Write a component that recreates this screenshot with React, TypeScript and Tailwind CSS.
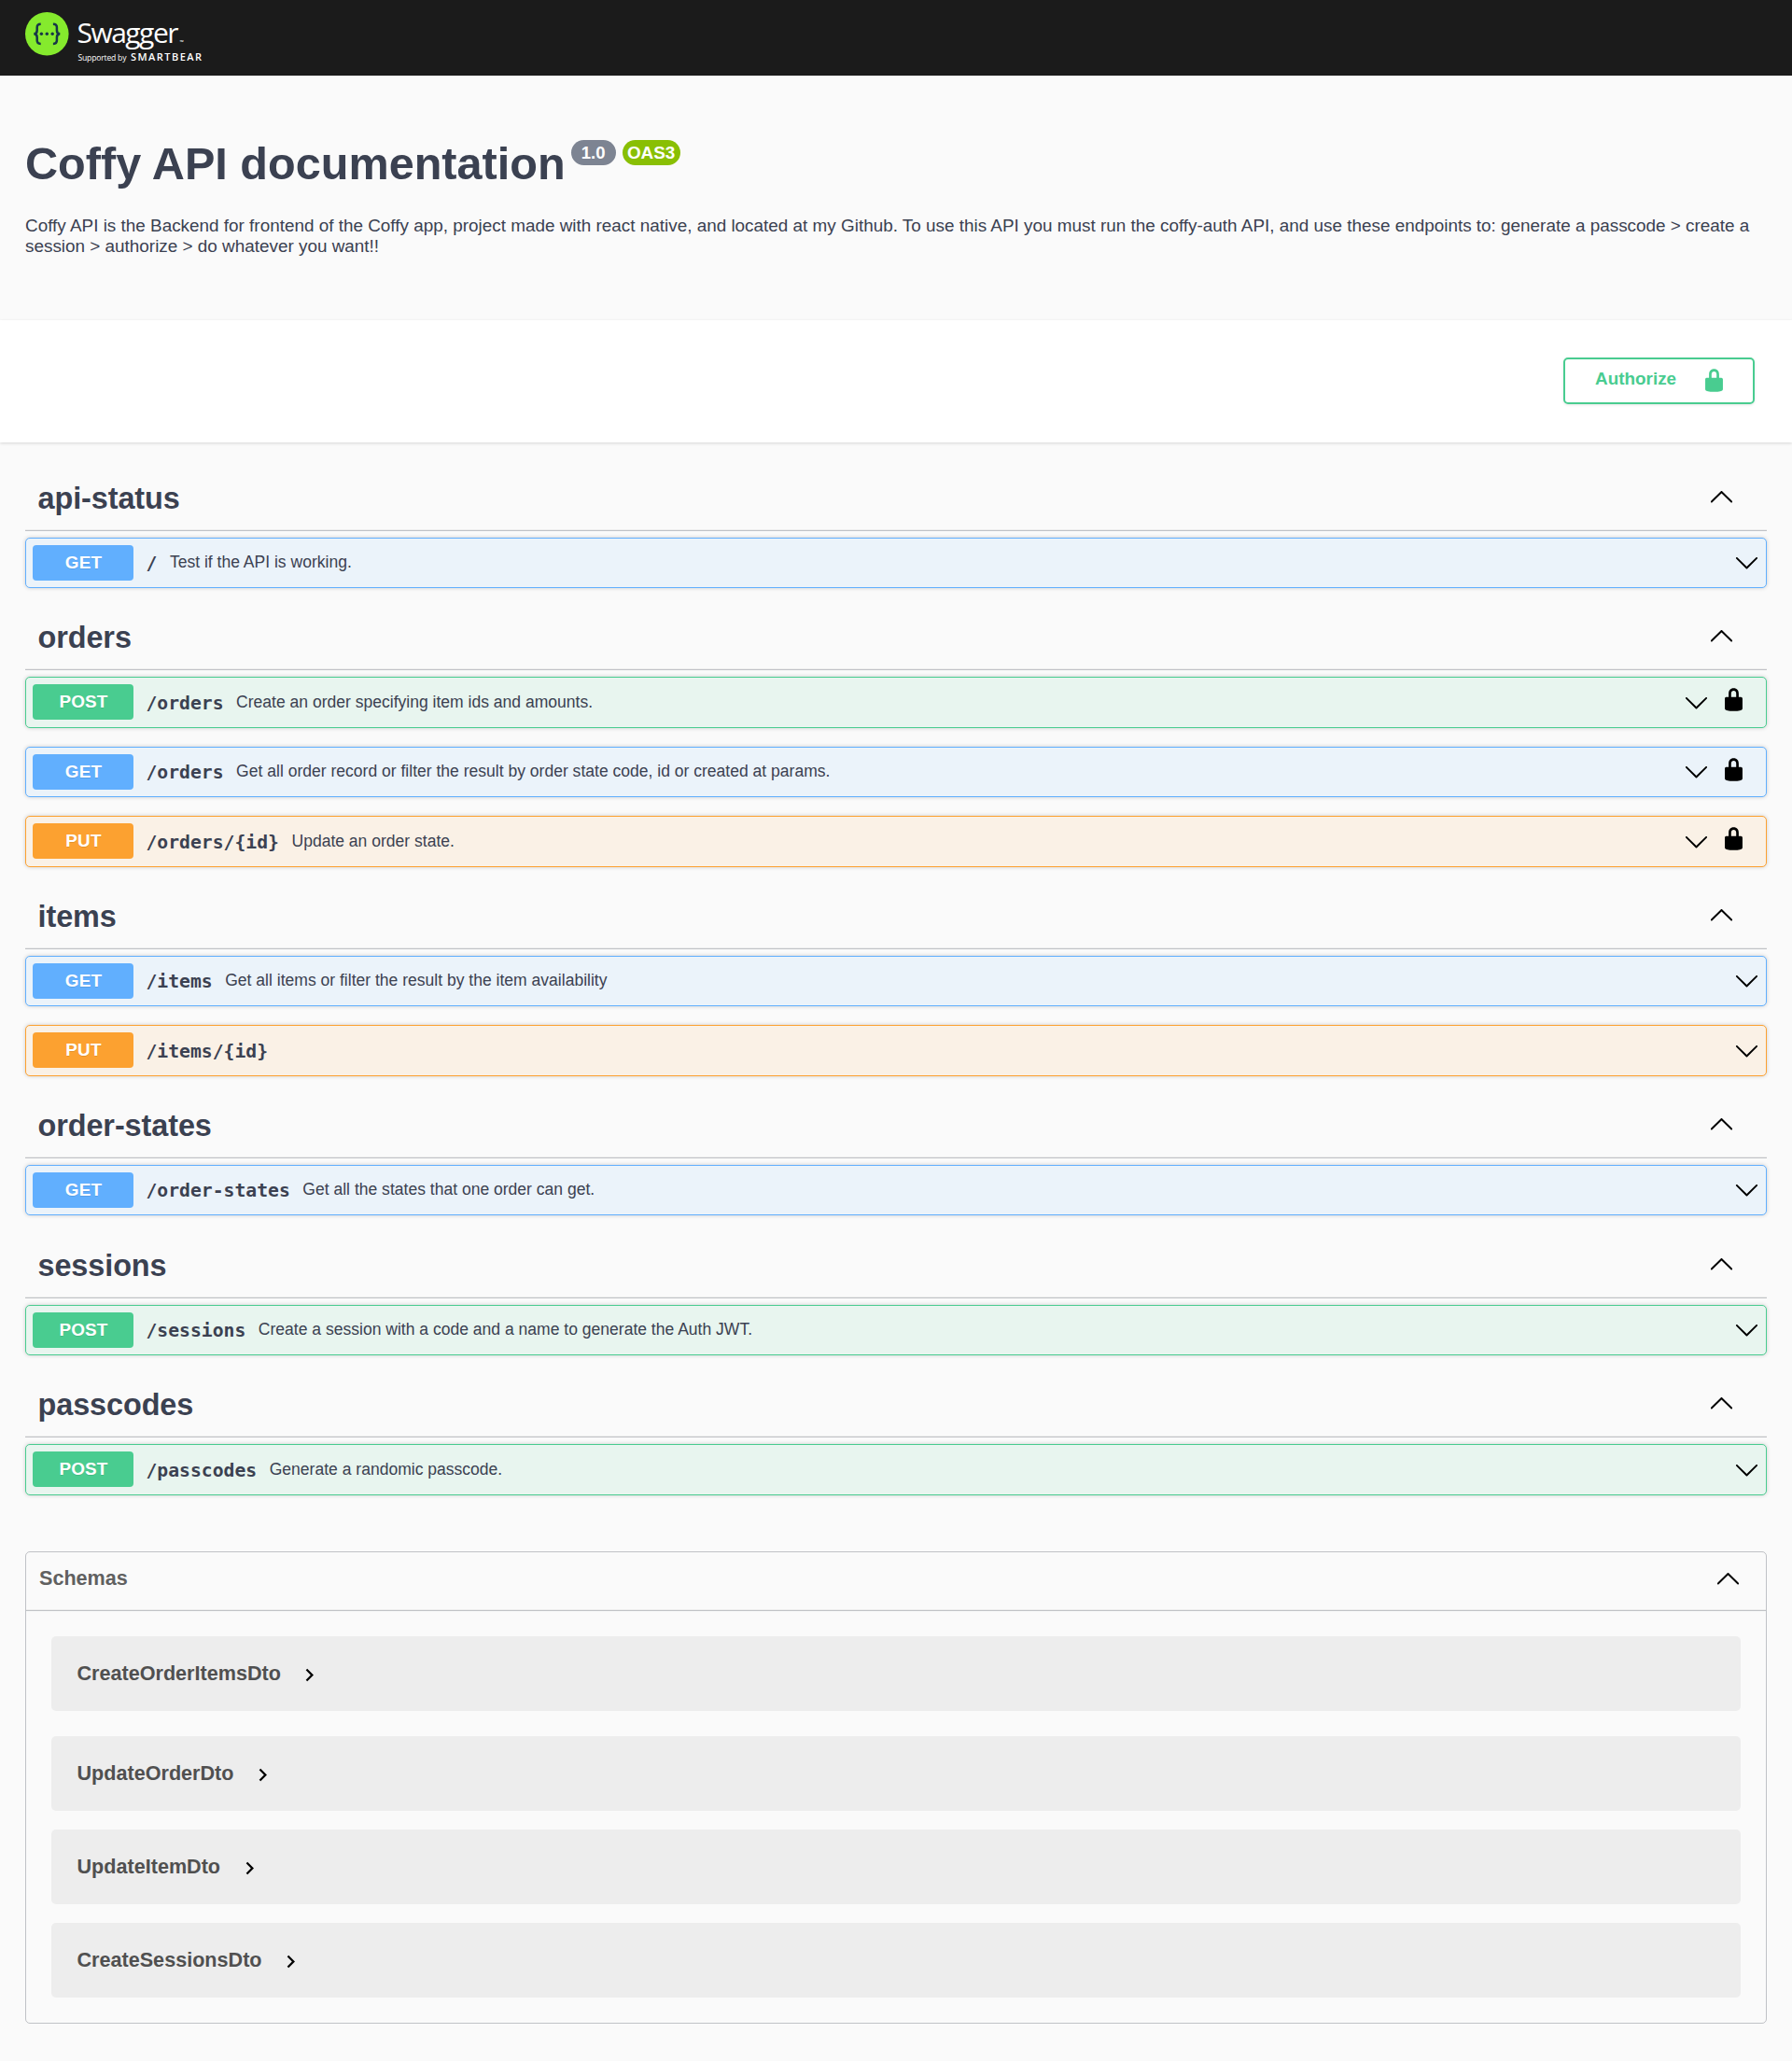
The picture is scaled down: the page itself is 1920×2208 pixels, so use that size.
type Method = 'GET' | 'POST' | 'PUT';

interface Operation {
  method: Method;
  path: string;
  summary: string;
  locked?: boolean;
  tall?: boolean;
}

interface Tag {
  name: string;
  operations: Operation[];
  spaced?: boolean;
}

const tags: Tag[] = [
  {
    name: 'api-status',
    operations: [{ method: 'GET', path: '/', summary: 'Test if the API is working.' }],
  },
  {
    name: 'orders',
    operations: [
      {
        method: 'POST',
        path: '/orders',
        summary: 'Create an order specifying item ids and amounts.',
        locked: true,
        tall: true,
      },
      {
        method: 'GET',
        path: '/orders',
        summary: 'Get all order record or filter the result by order state code, id or created at params.',
        locked: true,
      },
      { method: 'PUT', path: '/orders/{id}', summary: 'Update an order state.', locked: true, tall: true },
    ],
  },
  {
    name: 'items',
    operations: [
      { method: 'GET', path: '/items', summary: 'Get all items or filter the result by the item availability' },
      { method: 'PUT', path: '/items/{id}', summary: '', tall: true },
    ],
  },
  {
    name: 'order-states',
    operations: [{ method: 'GET', path: '/order-states', summary: 'Get all the states that one order can get.' }],
    spaced: true,
  },
  {
    name: 'sessions',
    operations: [
      { method: 'POST', path: '/sessions', summary: 'Create a session with a code and a name to generate the Auth JWT.' },
    ],
  },
  {
    name: 'passcodes',
    operations: [{ method: 'POST', path: '/passcodes', summary: 'Generate a randomic passcode.', tall: true }],
  },
];

const schemas = ['CreateOrderItemsDto', 'UpdateOrderDto', 'UpdateItemDto', 'CreateSessionsDto'];

const rowStyles: Record<Method, string> = {
  GET: 'border-[#61affe] bg-[#ebf3fa]',
  POST: 'border-[#49cc90] bg-[#e8f5ef]',
  PUT: 'border-[#fca130] bg-[#faf1e6]',
};

const badgeStyles: Record<Method, string> = {
  GET: 'bg-[#61affe]',
  POST: 'bg-[#49cc90]',
  PUT: 'bg-[#fca130]',
};

function ArrowDown({ className = '' }: { className?: string }) {
  return (
    <svg viewBox="0 0 20 20" className={`block size-[27px] shrink-0 ${className}`}>
      <path d="M17.418 6.109c.272-.268.709-.268.979 0s.271.701 0 .969l-7.908 7.83c-.27.268-.707.268-.979 0l-7.908-7.83c-.27-.268-.27-.701 0-.969.271-.268.709-.268.979 0L10 13.25l7.418-7.141z" />
    </svg>
  );
}

function ArrowUp({ className = '' }: { className?: string }) {
  return (
    <svg viewBox="0 0 20 20" className={`block size-[27px] shrink-0 ${className}`}>
      <path d="M17.418 14.908c.272.268.709.268.979 0s.271-.701 0-.969l-7.908-7.83c-.27-.268-.707-.268-.979 0l-7.908 7.83c-.27.268-.27.701 0 .969.271.268.709.268.979 0L10 7.767l7.418 7.141z" />
    </svg>
  );
}

function ArrowRight({ className = '' }: { className?: string }) {
  return (
    <svg viewBox="0 0 24 24" className={`block size-[27px] shrink-0 ${className}`}>
      <path d="M10 6L8.59 7.41 13.17 12l-4.58 4.59L10 18l6-6z" />
    </svg>
  );
}

function Lock({ className = '' }: { className?: string }) {
  return (
    <svg viewBox="0 0 20 20" className={`block size-[27px] shrink-0 ${className}`} fill="currentColor">
      <path d="M15.8 8H14V5.6C14 2.703 12.665 1 10 1 7.334 1 6 2.703 6 5.6V8H4c-.553 0-1 .646-1 1.199V17c0 .549.428 1.139.951 1.307l1.197.387C5.672 18.861 6.55 19 7.1 19h5.8c.549 0 1.428-.139 1.951-.307l1.196-.387c.524-.167.953-.757.953-1.306V9.199C17 8.646 16.352 8 15.8 8zM12 8H8V5.199C8 3.754 8.797 3 10 3c1.203 0 2 .754 2 2.199V8z" />
    </svg>
  );
}

function Logo() {
  return (
    <svg viewBox="0 0 200 60" className="block h-[60px] w-[200px]">
      <circle cx="23.3" cy="29.3" r="23.3" fill="#85ea2d" />
      <g fill="none" stroke="#173647" strokeWidth="2.5">
        <path d="M16.7 18.7c-3.2 0-4 1.2-4 3.6v3.2c0 2.4-.9 3.800-3.400 3.800 2.500 0 3.400 1.400 3.400 3.800v3.200c0 2.400.8 3.600 4 3.600" />
        <path d="M29.900 18.700c3.200 0 4 1.200 4 3.600v3.200c0 2.400.9 3.800 3.400 3.800-2.500 0-3.400 1.400-3.400 3.800v3.200c0 2.400-.8 3.600-4 3.600" />
      </g>
      <g fill="#173647">
        <circle cx="17.4" cy="29.3" r="1.7" />
        <circle cx="23.3" cy="29.3" r="1.7" />
        <circle cx="29.2" cy="29.3" r="1.7" />
      </g>
      <g fill="#fff">
        <text x="55.5" y="38.5" fontFamily="Open Sans" fontSize="30" textLength="109" lengthAdjust="spacing">
          Swagger
        </text>
        <text x="165.5" y="40" fontFamily="Open Sans" fontSize="5.5">
          ™
        </text>
        <text x="56.5" y="57.5" fontFamily="Open Sans" fontSize="8.6" textLength="52">
          Supported by
        </text>
        <text x="113" y="57.5" fontFamily="Open Sans" fontWeight="600" fontSize="11" textLength="76">
          SMARTBEAR
        </text>
      </g>
    </svg>
  );
}

function OperationRow({ method, path, summary, locked, tall }: Operation) {
  return (
    <div
      className={`flex items-start rounded-[5px] border pl-[7px] shadow-[0_0_4px_rgba(0,0,0,0.19)] ${rowStyles[method]} ${locked ? 'pr-[21px]' : 'pr-[7px]'} ${tall ? 'h-[55px]' : 'h-[54px]'}`}
    >
      <span
        className={`mt-[7px] h-[38px] w-[108px] shrink-0 rounded-[4px] pl-px text-center text-[18.9px] leading-[37px] font-bold tracking-[0.2px] text-white [text-shadow:0_1px_0_rgba(0,0,0,0.1)] ${badgeStyles[method]}`}
      >
        {method}
      </span>
      <div className={`flex flex-1 items-start ${tall ? 'pt-px' : ''}`}>
        <span className="mt-[15px] ml-[13.5px] font-['DejaVu_Sans_Mono',monospace] text-[19.73px] leading-[23px] font-bold whitespace-pre">
          {path}
        </span>
        <span className="mt-[14px] ml-[13.5px] flex-1 text-[17.55px] leading-[22px]">{summary}</span>
        <ArrowDown className="mt-[12px]" />
      </div>
      {locked && <Lock className="mt-[9.65px] ml-[13px] text-black" />}
    </div>
  );
}

function TagSection({ name, operations, spaced }: Tag) {
  return (
    <section>
      <div className="flex h-[68px] items-start justify-between border-b border-[#3b4151]/30 pr-[35px] pl-[13.5px] shadow-[inset_0_-1px_0_rgba(0,0,0,0.05)]">
        <h3 className="mt-[15px] text-[32.4px] leading-[36px] font-bold tracking-[-0.08px]">{name}</h3>
        <ArrowUp className="mt-[17px]" />
      </div>
      <div className={`flex flex-col gap-[20px] pt-[7px] ${spaced ? 'pb-[21px]' : 'pb-[20px]'}`}>
        {operations.map((op) => (
          <OperationRow key={op.method + op.path} {...op} />
        ))}
      </div>
    </section>
  );
}

export default function App() {
  return (
    <div className="min-h-[2208px] bg-[#fafafa] font-['Liberation_Sans',Arial,sans-serif] text-[#3b4151]">
      <header className="h-[81px] bg-[#1b1b1b] pt-[7px] pl-[27px]">
        <Logo />
      </header>

      <div className="h-[262px] px-[27px] pt-[66px]">
        <h1 className="flex items-start text-[48.6px] leading-[56px] font-bold">
          Coffy API documentation
          <span className="mt-[3px] ml-[6px] flex h-[27px] w-[48px] items-center justify-center rounded-full bg-[#7d8492] pt-px text-[18.5px] leading-none text-white">
            1.0
          </span>
          <span className="mt-[3px] ml-[7px] flex h-[27px] w-[62px] items-center justify-center rounded-full bg-[#89bf04] pt-px text-[18.9px] leading-none text-white">
            OAS3
          </span>
        </h1>
        <p className="mt-[28px] text-[18.9px] leading-[22px]">
          Coffy API is the Backend for frontend of the Coffy app, project made with react native, and located at my
          Github. To use this API you must run the coffy-auth API, and use these endpoints to: generate a passcode &gt;
          create a session &gt; authorize &gt; do whatever you want!!
        </p>
      </div>

      <div className="flex h-[131px] items-start justify-end bg-white pt-[40px] pr-[40px] shadow-[0_1px_3px_rgba(0,0,0,0.15)]">
        <button className="flex h-[50px] w-[205px] items-center rounded-[5px] border-2 border-[#49cc90] pl-[32px] text-[18.9px] font-bold text-[#49cc90] shadow-[0_1px_3px_rgba(0,0,0,0.1)]">
          <span className="w-[114px] pb-[3px] text-left">Authorize</span>
          <Lock className="-mt-[1px]" />
        </button>
      </div>

      <main className="px-[27px] pt-[27px]">
        {tags.map((tag) => (
          <TagSection key={tag.name} {...tag} />
        ))}

        <section className="mt-[40px] h-[506px] rounded-[5px] border border-[#3b4151]/30">
          <div className="flex h-[63px] items-start justify-between border-b border-[#3b4151]/30 pr-[27px] pl-[14px] shadow-[inset_0_-1px_0_rgba(0,0,0,0.05)]">
            <h4 className="mt-[15px] text-[21.6px] leading-[25px] font-bold text-[#606060]">Schemas</h4>
            <ArrowUp className="mt-[14px]" />
          </div>
          <div className="flex flex-col gap-[20px] px-[27px] pt-[27px]">
            {schemas.map((name) => (
              <div key={name} className="flex h-[80px] items-start rounded-[5px] bg-[#ededed] pl-[27.5px] first:mb-[7px]">
                <span className="mt-[27px] text-[21.6px] leading-[25px] font-bold text-[#505050]">{name}</span>
                <ArrowRight className="mt-[28px] ml-[17.5px]" />
              </div>
            ))}
          </div>
        </section>
      </main>
    </div>
  );
}
